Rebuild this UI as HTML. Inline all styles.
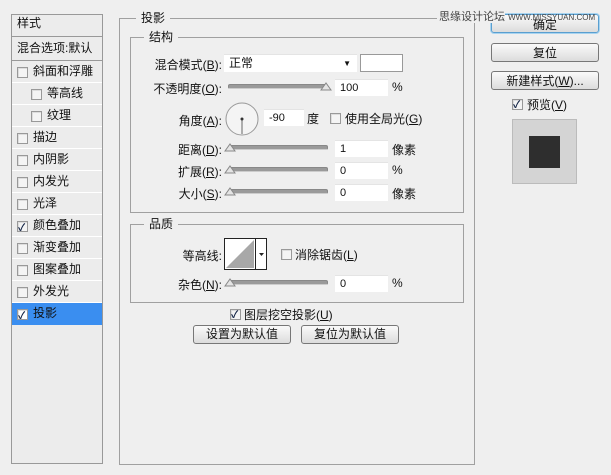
<!DOCTYPE html><html><head><meta charset="utf-8"><style>
body{margin:0;width:611px;height:475px;background:#efefef;font-family:"Liberation Sans","Noto Sans CJK SC",sans-serif;font-size:12px;color:#111;position:relative;overflow:hidden}
.a{position:absolute}
.row{position:absolute;left:12px;width:90px;height:21px;border-bottom:1px solid #fff;line-height:21px}
.cb{position:absolute;width:9px;height:9px;border:1px solid #999;background:#f4f4f4;box-shadow:inset 1px 1px 0 #ddd}
.cb.on::after{content:"✓";position:absolute;left:0;top:-4px;font-size:10px;color:#124;font-weight:bold}
.grp{position:absolute;border:1px solid #a0a0a0}
.lg{position:absolute;background:#efefef;padding:0 5px;font-size:12px}
.in{position:absolute;background:#fff;height:17px;line-height:17px;font-size:11px;padding-left:5px;box-sizing:border-box;border-top:1px solid #e4e4e4}
.sl{position:absolute;height:3px;background:#9a9a9a;border-radius:2px;border:1px solid #888;border-bottom-color:#ccc}
.btn{position:absolute;border:1px solid #777;border-radius:3px;background:linear-gradient(#fafafa,#dcdcdc);text-align:center;font-size:12px;box-sizing:border-box}
.lbl{position:absolute;text-align:right;font-size:12px}
</style></head><body>
<div class="a" style="left:11px;top:14px;width:90px;height:448px;border:1px solid #999;background:#ececec"></div>
<div class="a" style="left:12px;top:14px;width:90px;height:23px;border-bottom:1px solid #999;line-height:18px;padding-left:5px;box-sizing:border-box">样式</div>
<div class="a" style="left:12px;top:38px;width:90px;height:23px;border-bottom:1px solid #999;line-height:20px;padding-left:5px;box-sizing:border-box;font-size:12px;white-space:nowrap;overflow:hidden">混合选项:默认</div>
<div class="row" style="top:61px"><span class="cb" style="left:5px;top:6px"></span><span class="a" style="left:21px">斜面和浮雕</span></div>
<div class="row" style="top:83px"><span class="cb" style="left:19px;top:6px"></span><span class="a" style="left:35px">等高线</span></div>
<div class="row" style="top:105px"><span class="cb" style="left:19px;top:6px"></span><span class="a" style="left:35px">纹理</span></div>
<div class="row" style="top:127px"><span class="cb" style="left:5px;top:6px"></span><span class="a" style="left:21px">描边</span></div>
<div class="row" style="top:149px"><span class="cb" style="left:5px;top:6px"></span><span class="a" style="left:21px">内阴影</span></div>
<div class="row" style="top:171px"><span class="cb" style="left:5px;top:6px"></span><span class="a" style="left:21px">内发光</span></div>
<div class="row" style="top:193px"><span class="cb" style="left:5px;top:6px"></span><span class="a" style="left:21px">光泽</span></div>
<div class="row" style="top:215px"><span class="cb on" style="left:5px;top:6px"></span><span class="a" style="left:21px">颜色叠加</span></div>
<div class="row" style="top:237px"><span class="cb" style="left:5px;top:6px"></span><span class="a" style="left:21px">渐变叠加</span></div>
<div class="row" style="top:259px"><span class="cb" style="left:5px;top:6px"></span><span class="a" style="left:21px">图案叠加</span></div>
<div class="row" style="top:281px"><span class="cb" style="left:5px;top:6px"></span><span class="a" style="left:21px">外发光</span></div>
<div class="row" style="top:303px;background:#3a8ef0;border-bottom:none;height:22px"><span class="cb on" style="left:5px;top:6px;background:#fff"></span><span class="a" style="left:21px;color:#111">投影</span></div>

<div class="grp" style="left:119px;top:18px;width:354px;height:445px"></div>
<div class="lg" style="left:136px;top:9px">投影</div>
<div class="grp" style="left:130px;top:37px;width:332px;height:174px"></div>
<div class="lg" style="left:144px;top:28px">结构</div>
<div class="lbl" style="left:140px;top:56px;width:82px">混合模式(<u>B</u>):</div>
<div class="in" style="left:224px;top:54px;width:133px;height:18px;line-height:17px;font-size:12px">正常<span class="a" style="right:6px;top:0;font-size:8px">▼</span></div>
<div class="a" style="left:360px;top:54px;width:41px;height:16px;border:1px solid #999;background:#fff"></div>
<div class="lbl" style="left:140px;top:80px;width:82px">不透明度(<u>O</u>):</div>
<div class="sl" style="left:228px;top:84px;width:98px"></div>
<svg class="a" style="left:320px;top:80px" width="12" height="11"><path d="M1 10 L6 3 L11 10 Z" fill="#e4e4e4" stroke="#888"/></svg>
<div class="in" style="left:335px;top:79px;width:53px">100</div><div class="a" style="left:392px;top:80px">%</div>
<div class="lbl" style="left:140px;top:112px;width:82px">角度(<u>A</u>):</div>
<svg class="a" style="left:224px;top:101px" width="36" height="36"><circle cx="18" cy="18" r="16" fill="#f4f4f4" stroke="#999"/><line x1="18" y1="18" x2="18" y2="33" stroke="#666"/><circle cx="18" cy="18" r="1.5" fill="#333"/></svg>
<div class="in" style="left:264px;top:109px;width:40px">-90</div><div class="a" style="left:307px;top:110px">度</div>
<span class="cb" style="left:330px;top:113px"></span><div class="a" style="left:345px;top:110px">使用全局光(<u>G</u>)</div>
<div class="lbl" style="left:140px;top:141px;width:82px">距离(<u>D</u>):</div>
<div class="lbl" style="left:140px;top:163px;width:82px">扩展(<u>R</u>):</div>
<div class="lbl" style="left:140px;top:185px;width:82px">大小(<u>S</u>):</div>
<div class="sl" style="left:228px;top:145px;width:98px"></div><div class="sl" style="left:228px;top:167px;width:98px"></div><div class="sl" style="left:228px;top:189px;width:98px"></div>
<svg class="a" style="left:224px;top:141px" width="12" height="60"><path d="M1 10 L6 3 L11 10 Z M1 32 L6 25 L11 32 Z M1 54 L6 47 L11 54Z" fill="#e4e4e4" stroke="#888"/></svg>
<div class="in" style="left:335px;top:140px;width:53px">1</div><div class="a" style="left:392px;top:141px">像素</div>
<div class="in" style="left:335px;top:162px;width:53px">0</div><div class="a" style="left:392px;top:163px">%</div>
<div class="in" style="left:335px;top:184px;width:53px">0</div><div class="a" style="left:392px;top:185px">像素</div>

<div class="grp" style="left:130px;top:224px;width:332px;height:77px"></div>
<div class="lg" style="left:144px;top:215px">品质</div>
<div class="lbl" style="left:140px;top:247px;width:82px">等高线:</div>
<svg class="a" style="left:224px;top:238px" width="43" height="32"><rect x="0.5" y="0.5" width="42" height="31" fill="#fff" stroke="#222"/><path d="M2 30 L30 2 L30 30 Z" fill="#a8a8a8"/><line x1="31.5" y1="1" x2="31.5" y2="31" stroke="#222"/><path d="M35 15 L40 15 L37.5 18Z" fill="#222"/></svg>
<span class="cb" style="left:281px;top:249px"></span><div class="a" style="left:295px;top:246px">消除锯齿(<u>L</u>)</div>
<div class="lbl" style="left:140px;top:276px;width:82px">杂色(<u>N</u>):</div>
<div class="sl" style="left:228px;top:280px;width:98px"></div>
<svg class="a" style="left:224px;top:276px" width="12" height="11"><path d="M1 10 L6 3 L11 10 Z" fill="#e4e4e4" stroke="#888"/></svg>
<div class="in" style="left:335px;top:275px;width:53px">0</div><div class="a" style="left:392px;top:276px">%</div>

<span class="cb on" style="left:230px;top:309px"></span><div class="a" style="left:244px;top:306px">图层挖空投影(<u>U</u>)</div>
<div class="btn" style="left:193px;top:325px;width:98px;height:19px;line-height:17px">设置为默认值</div>
<div class="btn" style="left:301px;top:325px;width:98px;height:19px;line-height:17px">复位为默认值</div>

<div class="btn" style="left:491px;top:14px;width:108px;height:19px;line-height:20px;border-color:#5a9fd0;box-shadow:0 0 0 1px #a8d4f0">确定</div>
<div class="a" style="left:437px;top:8px;font-size:11px;color:#444;white-space:nowrap;z-index:5"><span style="background:#efefef;padding-left:2px">思缘设计论坛</span> <span style="font-size:8px">WWW.MISSYUAN.COM</span></div>
<div class="btn" style="left:491px;top:43px;width:108px;height:19px;line-height:18px">复位</div>
<div class="btn" style="left:491px;top:71px;width:108px;height:19px;line-height:18px">新建样式(<u>W</u>)...</div>
<span class="cb on" style="left:512px;top:99px"></span><div class="a" style="left:527px;top:96px">预览(<u>V</u>)</div>
<div class="a" style="left:512px;top:119px;width:65px;height:65px;background:#d4d4d4;border:1px solid #bbb;box-sizing:border-box"></div>
<div class="a" style="left:529px;top:136px;width:31px;height:32px;background:#2e2e2e"></div>
</body></html>
